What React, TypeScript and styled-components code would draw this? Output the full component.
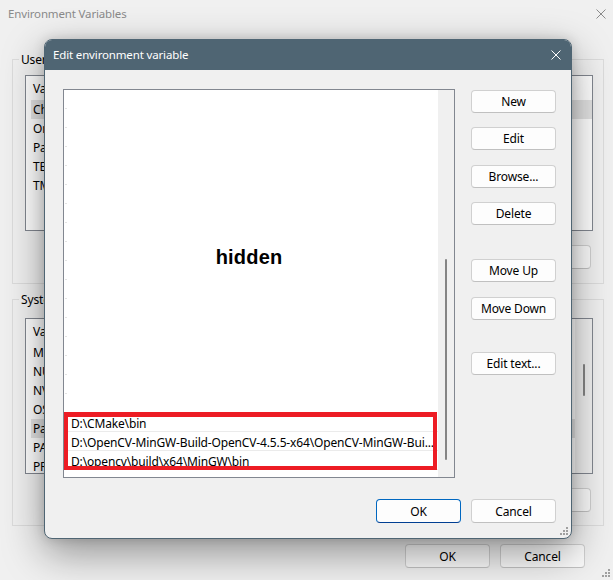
import React from "react";
import styled, { createGlobalStyle } from "styled-components";

const GlobalStyle = createGlobalStyle`
  html, body { margin: 0; padding: 0; }
  body {
    background: #f0f0f0;
    font-family: "Noto Sans", "Segoe UI", sans-serif;
    font-size: 12px;
    letter-spacing: -0.15px;
    color: #000;
  }
  * { box-sizing: border-box; }
`;

const FONT = `"Noto Sans", "Segoe UI", sans-serif`;

/* ---------- background window ---------- */

const Window = styled.div`
  position: relative;
  width: 613px;
  height: 580px;
  overflow: hidden;
  background: #f0f0f0;
  display: flex;
  flex-direction: column;
`;

const BgTitleBar = styled.div`
  height: 27px;
  display: flex;
  align-items: center;
  justify-content: space-between;
  padding: 0 7px 0 8px;
  color: #8a8a8a;
  font-size: 11.5px;
`;

const BgContent = styled.div`
  padding: 32px 0 0 12px;
  display: flex;
  flex-direction: column;
`;

const GroupBox = styled.div<{ $mt?: number; $pb: number }>`
  width: 592px;
  margin-top: ${(p) => p.$mt ?? 0}px;
  border: 1px solid #dcdcdc;
  padding: 0 10px ${(p) => p.$pb}px 12px;
  display: flex;
  flex-direction: column;
`;

const Legend = styled.div`
  display: block;
  width: fit-content;
  height: 16px;
  line-height: 16px;
  margin: -8px 0 0 -6px;
  padding: 0 2px;
  background: #f0f0f0;
  white-space: nowrap;
`;

const BgList = styled.div<{ $mt: number }>`
  margin-top: ${(p) => p.$mt}px;
  height: 156px;
  border: 1px solid #828790;
  background: #fff;
  display: flex;
  overflow: hidden;
`;

const BgListBody = styled.div`
  flex: 1;
  min-width: 0;
  display: flex;
  flex-direction: column;
  padding-left: 5px;
`;

const BgHeader = styled.div`
  height: 24px;
  flex: none;
  display: flex;
  align-items: center;
  padding-left: 2px;
`;

const BgRow = styled.div<{ $sel?: boolean }>`
  height: 19px;
  flex: none;
  display: flex;
  align-items: center;
  padding-left: 2px;
  white-space: nowrap;
  background: ${(p) => (p.$sel ? "#e3e3e3" : "transparent")};
`;

const BgScroll = styled.div`
  width: 17px;
  flex: none;
  background: #f0f0f0;
  display: flex;
  justify-content: center;
  padding-top: 45px;
`;

const BgThumb = styled.div`
  width: 2px;
  height: 32px;
  border-radius: 1px;
  background: #858585;
`;

const BgButtonRow = styled.div<{ $mt: number; $pr?: number }>`
  margin-top: ${(p) => p.$mt}px;
  padding-right: ${(p) => p.$pr ?? 2}px;
  display: flex;
  justify-content: flex-end;
  gap: 10px;
`;

const BgButton = styled.button`
  width: 85px;
  height: 24px;
  padding: 0;
  background: #fbfbfb;
  border: 1px solid #d0d0d0;
  border-bottom-color: #c2c2c2;
  border-radius: 4px;
  font: 12px ${FONT};
  letter-spacing: -0.15px;
  color: #000;
`;

const Grip = styled.div`
  position: absolute;
  right: 2px;
  bottom: 2px;
  width: 10px;
  height: 10px;
  display: flex;
`;

/* ---------- foreground dialog ---------- */

const Dialog = styled.div`
  position: absolute;
  left: 44px;
  top: 39px;
  width: 528px;
  height: 500px;
  border: 1px solid #4f6573;
  border-radius: 8px;
  overflow: hidden;
  background: #f0f0f0;
  box-shadow: 0 14px 42px rgba(0, 0, 0, 0.4), 0 0 12px rgba(0, 0, 0, 0.15);
  display: flex;
  flex-direction: column;
`;

const DlgTitle = styled.div`
  height: 30px;
  flex: none;
  background: #4f6573;
  color: #fff;
  display: flex;
  align-items: center;
  justify-content: space-between;
  padding: 0 10px 1px 8px;
  font-size: 11.5px;
`;

const DlgBody = styled.div`
  display: flex;
  padding: 19px 15px 0 18px;
`;

const ListBox = styled.div`
  width: 392px;
  height: 389px;
  flex: none;
  border: 1px solid #828790;
  background: #fff;
  display: flex;
`;

const ListContent = styled.div`
  position: relative;
  flex: 1;
  min-width: 0;
  display: flex;
  flex-direction: column;
`;

const HiddenArea = styled.div`
  height: 323px;
  flex: none;
  display: flex;
  align-items: center;
  justify-content: center;
  padding: 11px 4px 0 0;
  background-color: #fff;
  background-image: repeating-linear-gradient(
    to bottom,
    transparent 0 18px,
    #e3e3e3 18px 19px
  );
  background-size: 2px 100%;
  background-position: 1px 0;
  background-repeat: no-repeat;
`;

const HiddenText = styled.span`
  font: bold 20px "Liberation Sans", Arial, sans-serif;
  letter-spacing: 0.2px;
  color: #000;
`;

const PathRow = styled.div`
  height: 19px;
  flex: none;
  display: flex;
  align-items: center;
  padding: 2px 0 0 7px;
  border-bottom: 1px solid #ebebeb;
  white-space: nowrap;
  overflow: hidden;
`;

const RedMark = styled.div`
  position: absolute;
  left: 0;
  top: 322px;
  width: 373px;
  height: 58px;
  border: 4px solid #ed1c24;
  border-top-width: 5px;
  pointer-events: none;
`;

const Scrollbar = styled.div`
  width: 16px;
  flex: none;
  background: #f0f0f0;
  display: flex;
  justify-content: center;
  padding-top: 169px;
`;

const Thumb = styled.div`
  width: 2px;
  height: 201px;
  border-radius: 1px;
  background: #858585;
`;

const ButtonCol = styled.div`
  width: 85px;
  margin-left: 16px;
  display: flex;
  flex-direction: column;
`;

const DlgButton = styled.button<{ $mt?: number; $primary?: boolean }>`
  width: 85px;
  height: ${(p) => (p.$primary !== undefined ? 24 : 23)}px;
  margin-top: ${(p) => p.$mt ?? 0}px;
  padding: 0;
  background: #fdfdfd;
  border: 1px solid ${(p) => (p.$primary ? "#0067c0" : "#d0d0d0")};
  border-bottom-color: ${(p) => (p.$primary ? "#003e92" : "#c0c0c0")};
  border-radius: 4px;
  font: 12px ${FONT};
  letter-spacing: -0.15px;
  color: #000;
  flex: none;
`;

const Footer = styled.div`
  display: flex;
  justify-content: flex-end;
  gap: 10px;
  margin-top: 21px;
  padding-right: 15px;
`;

const CloseX = ({ color }: { color: string }) => (
  <svg width="10" height="10" viewBox="0 0 10 10">
    <path d="M0.5 0.5 L9.5 9.5 M9.5 0.5 L0.5 9.5" stroke={color} strokeWidth="1" />
  </svg>
);

const GripDots = () => (
  <svg width="10" height="10" viewBox="0 0 10 10">
    {[
      [7, 1],
      [4, 4],
      [7, 4],
      [1, 7],
      [4, 7],
      [7, 7],
    ].map(([x, y], i) => (
      <rect key={i} x={x} y={y} width="2" height="2" fill="#a0a0a0" />
    ))}
  </svg>
);

const userVars = ["ChocolateyLastPathUpdate", "OneDrive", "Path", "TEMP", "TMP"];
const systemVars = ["MOZ_PLUGIN_PATH", "NUMBER_OF_PROCESSORS", "NVM_HOME", "OS", "Path", "PATHEXT", "PROCESSOR_ARCHITECTURE"];

export default function App() {
  return (
    <>
      <GlobalStyle />
      <Window>
        <BgTitleBar>
          <span>Environment Variables</span>
          <CloseX color="#8a8a8a" />
        </BgTitleBar>
        <BgContent>
          <GroupBox $pb={14}>
            <Legend>User variables</Legend>
            <BgList $mt={7}>
              <BgListBody>
                <BgHeader>Variable</BgHeader>
                {userVars.map((v, i) => (
                  <BgRow key={v} $sel={i === 0}>{v}</BgRow>
                ))}
              </BgListBody>
            </BgList>
            <BgButtonRow $mt={14}>
              <BgButton>New...</BgButton>
              <BgButton>Edit...</BgButton>
              <BgButton>Delete</BgButton>
            </BgButtonRow>
          </GroupBox>
          <GroupBox $mt={15} $pb={13}>
            <Legend>System variables</Legend>
            <BgList $mt={10}>
              <BgListBody>
                <BgHeader>Variable</BgHeader>
                {systemVars.map((v, i) => (
                  <BgRow key={v + i} $sel={i === 4}>{v}</BgRow>
                ))}
              </BgListBody>
              <BgScroll>
                <BgThumb />
              </BgScroll>
            </BgList>
            <BgButtonRow $mt={14}>
              <BgButton>New...</BgButton>
              <BgButton>Edit...</BgButton>
              <BgButton>Delete</BgButton>
            </BgButtonRow>
          </GroupBox>
          <BgButtonRow $mt={18} $pr={28}>
            <BgButton>OK</BgButton>
            <BgButton>Cancel</BgButton>
          </BgButtonRow>
        </BgContent>
        <Grip>
          <GripDots />
        </Grip>

        <Dialog>
          <DlgTitle>
            <span>Edit environment variable</span>
            <CloseX color="#ffffff" />
          </DlgTitle>
          <DlgBody>
            <ListBox>
              <ListContent>
                <HiddenArea>
                  <HiddenText>hidden</HiddenText>
                </HiddenArea>
                <PathRow>D:\CMake\bin</PathRow>
                <PathRow>D:\OpenCV-MinGW-Build-OpenCV-4.5.5-x64\OpenCV-MinGW-Bui...</PathRow>
                <PathRow>D:\opencv\build\x64\MinGW\bin</PathRow>
                <RedMark />
              </ListContent>
              <Scrollbar>
                <Thumb />
              </Scrollbar>
            </ListBox>
            <ButtonCol>
              <DlgButton $mt={1}>New</DlgButton>
              <DlgButton $mt={14}>Edit</DlgButton>
              <DlgButton $mt={15}>Browse...</DlgButton>
              <DlgButton $mt={14}>Delete</DlgButton>
              <DlgButton $mt={34}>Move Up</DlgButton>
              <DlgButton $mt={15}>Move Down</DlgButton>
              <DlgButton $mt={32}>Edit text...</DlgButton>
            </ButtonCol>
          </DlgBody>
          <Footer>
            <DlgButton $primary>OK</DlgButton>
            <DlgButton $primary={false}>Cancel</DlgButton>
          </Footer>
          <Grip>
            <GripDots />
          </Grip>
        </Dialog>
      </Window>
    </>
  );
}
